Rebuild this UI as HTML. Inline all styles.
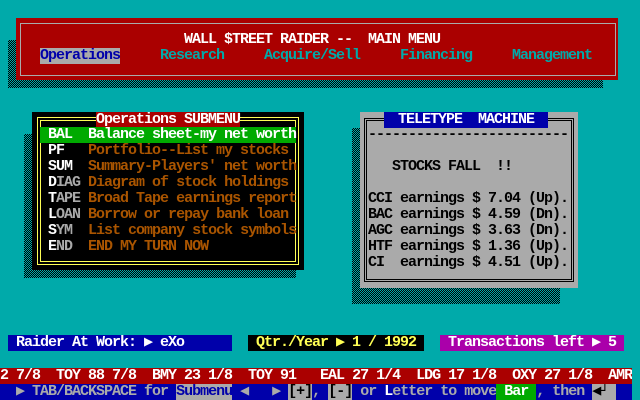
<!DOCTYPE html>
<html><head><meta charset="utf-8"><style>
*{margin:0;padding:0;box-sizing:border-box}
body{width:640px;height:400px;background:#00aaaa;position:relative;overflow:hidden;font-family:"Liberation Mono",monospace;font-size:15px;letter-spacing:-1px;font-weight:bold;line-height:16px}
.a{position:absolute;white-space:pre}
.sh{position:absolute;background:repeating-conic-gradient(#000 0 25%,#00aaaa 0 50%) 0 0/2px 2px}
.w{color:#fff}.g{color:#aaa}.br{color:#aa5500}.c{color:#00aaaa}.k{color:#000}.y{color:#ffff55}
</style></head><body>
<!-- main menu -->
<div class="sh" style="left:8px;top:40px;width:595px;height:48px"></div>
<div class="a" style="left:16px;top:18px;width:602px;height:62px;background:#aa0000"></div>
<div class="a" style="left:20px;top:23px;width:596px;height:53px;border:1px solid #aaa"></div>
<div class="a w" style="left:184px;top:32px">WALL $TREET RAIDER --  MAIN MENU</div>
<div class="a" style="left:40px;top:48px;background:#aaa;color:#0000aa">Operations</div>
<div class="a c" style="left:160px;top:48px">Research</div>
<div class="a c" style="left:264px;top:48px">Acquire/Sell</div>
<div class="a c" style="left:400px;top:48px">Financing</div>
<div class="a c" style="left:512px;top:48px">Management</div>
<!-- submenu -->
<div class="sh" style="left:24px;top:134px;width:272px;height:144px"></div>
<div class="a" style="left:32px;top:112px;width:272px;height:158px;background:#000"></div>
<div class="a" style="left:37px;top:117px;width:262px;height:148px;border:1px solid #ffff55"></div>
<div class="a" style="left:40px;top:120px;width:256px;height:142px;border:1px solid #ffff55"></div>
<div class="a w" style="left:96px;top:112px;background:#aa0000;height:15px;line-height:15px">Operations SUBMENU</div>
<div class="a" style="left:40px;top:127px;width:256px;height:16px;background:#00aa00"></div>
<div class="a w" style="left:48px;top:127px">BAL  Balance sheet-my net worth</div>
<div class="a" style="left:48px;top:143px"><span class="w">PF</span>   <span class="br">Portfolio--List my stocks</span></div>
<div class="a" style="left:48px;top:159px"><span class="w">SUM</span>  <span class="br">Summary-Players' net worth</span></div>
<div class="a" style="left:48px;top:175px"><span class="w">D</span><span class="g">IAG</span> <span class="br">Diagram of stock holdings</span></div>
<div class="a" style="left:48px;top:191px"><span class="w">T</span><span class="g">APE</span> <span class="br">Broad Tape earnings report</span></div>
<div class="a" style="left:48px;top:207px"><span class="w">L</span><span class="g">OAN</span> <span class="br">Borrow or repay bank loan</span></div>
<div class="a" style="left:48px;top:223px"><span class="w">S</span><span class="g">YM</span>  <span class="br">List company stock symbols</span></div>
<div class="a" style="left:48px;top:239px"><span class="w">E</span><span class="g">ND</span>  <span class="br">END MY TURN NOW</span></div>
<!-- teletype -->
<div class="sh" style="left:352px;top:128px;width:208px;height:176px"></div>
<div class="a" style="left:360px;top:112px;width:218px;height:176px;background:#aaa"></div>
<div class="a" style="left:364px;top:118px;width:210px;height:164px;border:1px solid #000"></div>
<div class="a" style="left:366px;top:120px;width:206px;height:160px;border:1px solid #000"></div>
<div class="a w" style="left:384px;top:112px;width:164px;height:16px;background:#0000aa;text-align:center">TELETYPE  MACHINE</div>
<div class="a k" style="left:368px;top:127px">-------------------------</div>
<div class="a k" style="left:392px;top:159px">STOCKS FALL  !!</div>
<div class="a k" style="left:368px;top:191px">CCI earnings $ 7.04 (Up).</div>
<div class="a k" style="left:368px;top:207px">BAC earnings $ 4.59 (Dn).</div>
<div class="a k" style="left:368px;top:223px">AGC earnings $ 3.63 (Dn).</div>
<div class="a k" style="left:368px;top:239px">HTF earnings $ 1.36 (Up).</div>
<div class="a k" style="left:368px;top:255px">CI  earnings $ 4.51 (Up).</div>
<!-- status -->
<div class="a w" style="left:8px;top:335px;width:224px;height:16px;background:#0000aa;padding-left:8px">Raider At Work: ▶ eXo</div>
<div class="a y" style="left:248px;top:335px;width:176px;height:16px;background:#000;padding-left:8px">Qtr./Year ▶ 1 / 1992</div>
<div class="a w" style="left:440px;top:335px;width:184px;height:16px;background:#aa00aa;padding-left:8px">Transactions left ▶ 5</div>
<!-- ticker -->
<div class="a w" style="left:0;top:368px;width:632px;height:16px;background:#aa0000;overflow:hidden">2 7/8  TOY 88 7/8  BMY 23 1/8  TOY 91   EAL 27 1/4  LDG 17 1/8  OXY 27 1/8  AMR</div>
<div class="a g" style="left:0;top:384px;width:632px;height:16px;background:#0000aa;overflow:hidden">  ▶ TAB/BACKSPACE for <span style="background:#aaa;color:#0000aa">Submenu</span> ◀   ▶ <span style="background:#aaa;color:#000">[+]</span>, <span style="background:#aaa;color:#000">[-]</span> or <span class="w">L</span>etter to move<span class="w" style="background:#00aa00"> Bar </span>, then <span style="background:#aaa;color:#000">◀┘ </span></div>
</body></html>
